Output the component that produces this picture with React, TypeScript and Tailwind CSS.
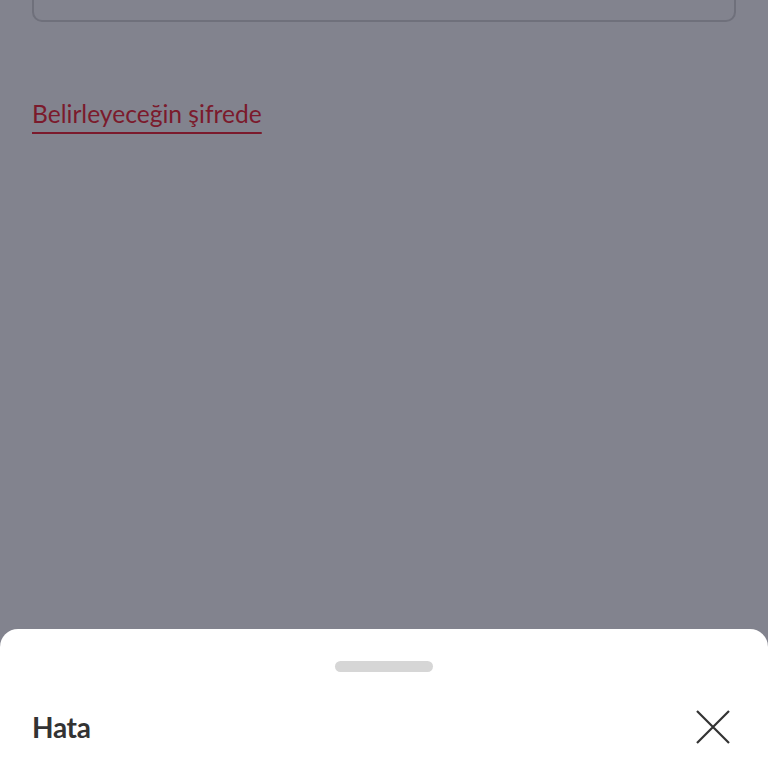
export default function App() {
  return (
    <div className="w-[768px] h-[768px] overflow-hidden bg-[#82838e] flex flex-col font-['Lato',sans-serif]">
      {/* dimmed page behind the sheet */}
      <div className="px-8 flex flex-col">
        <div className="-mt-[40px] h-[62px] rounded-[10px] border-2 border-[#6f707b]" />
        <a className="mt-[77px] self-start text-[24.6px] leading-[30px] text-[#7b1a2c] underline decoration-2 underline-offset-[9px]">
          Belirleyeceğin şifrede
        </a>
      </div>

      <div className="flex-1" />

      {/* bottom sheet */}
      <div className="h-[139px] bg-white rounded-t-[18px] flex flex-col">
        <div className="flex justify-center pt-[32px]">
          <div className="w-[98px] h-[11px] rounded-full bg-[#d6d6d6]" />
        </div>
        <div className="flex items-center justify-between pl-8 pr-[38px] mt-[38px]">
          <span className="text-[28px] leading-[34px] font-bold text-[#333333] tracking-[-0.3px]">Hata</span>
          <svg width="34" height="34" viewBox="0 0 34 34" fill="none" stroke="#333333" strokeWidth="2.2">
            <path d="M1 1 L33 33 M33 1 L1 33" />
          </svg>
        </div>
      </div>
    </div>
  );
}
